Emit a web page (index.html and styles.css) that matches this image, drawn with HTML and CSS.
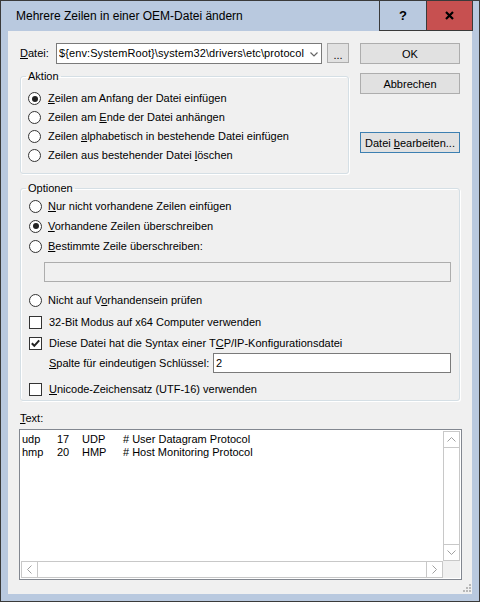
FILE: index.html
```html
<!DOCTYPE html>
<html>
<head>
    <meta charset="utf-8">
    <link rel="stylesheet" href="styles.css">
</head>
<body>
    <div class="window">
        <div class="titlebar">
            <span class="title">Mehrere Zeilen in einer OEM-Datei ändern</span>
            <div class="caption_btn help">?</div>
            <div class="caption_btn close">
                <svg width="9" height="9" viewBox="0 0 9 9"><path d="M1 1 L8 8 M8 1 L1 8" stroke="#000" stroke-width="2.2"/></svg>
            </div>
        </div>

        <div class="client">
            <div class="top">
                <div class="left_col">
                    <!-- file selection -->
                    <div class="file_row">
                        <span class="file_label"><u>D</u>atei:</span>
                        <div class="combo">
                            <span class="combo_text">${env:SystemRoot}\system32\drivers\etc\protocol</span>
                            <svg class="combo_arrow" width="8" height="5" viewBox="0 0 8 5"><polyline points="0.5,0.5 4,4 7.5,0.5" fill="none" stroke="#666" stroke-width="1.2"/></svg>
                        </div>
                        <button class="btn browse">...</button>
                    </div>

                    <fieldset class="group action">
                        <legend>Aktion</legend>
                        <div class="opt"><span class="radio checked"></span><span><u>Z</u>eilen am Anfang der Datei einfügen</span></div>
                        <div class="opt"><span class="radio"></span><span>Zeilen am <u>E</u>nde der Datei anhängen</span></div>
                        <div class="opt"><span class="radio"></span><span>Zeilen <u>a</u>lphabetisch in bestehende Datei einfügen</span></div>
                        <div class="opt"><span class="radio"></span><span>Zeilen aus bestehender Datei <u>l</u>öschen</span></div>
                    </fieldset>
                </div>

                <div class="side_buttons">
                    <button class="btn ok">OK</button>
                    <button class="btn cancel">Abbrechen</button>
                    <button class="btn edit focused">Datei <u>b</u>earbeiten...</button>
                </div>
            </div>

            <fieldset class="group options">
                <legend>Optionen</legend>
                <div class="opt r1"><span class="radio"></span><span><u>N</u>ur nicht vorhandene Zeilen einfügen</span></div>
                <div class="opt r1"><span class="radio checked"></span><span><u>V</u>orhandene Zeilen überschreiben</span></div>
                <div class="opt r1"><span class="radio"></span><span><u>B</u>estimmte Zeile überschreiben:</span></div>
                <div class="line_input disabled"></div>
                <div class="opt r4"><span class="radio"></span><span>Nicht auf V<u>o</u>rhandensein prüfen</span></div>
                <div class="opt r5"><span class="check"></span><span>32-Bit Modus auf x64 Computer verwenden</span></div>
                <div class="opt r6">
                    <span class="check">
                        <svg width="11" height="11" viewBox="0 0 11 11"><polyline points="1.8,5.2 4.3,7.8 9.2,2.4" fill="none" stroke="#222" stroke-width="2"/></svg>
                    </span>
                    <span>Diese Datei hat die Syntax einer T<u>C</u>P/IP-Konfigurationsdatei</span>
                </div>
                <div class="key_row">
                    <span class="key_label"><u>S</u>palte für eindeutigen Schlüssel:</span>
                    <div class="line_input key_input">2</div>
                </div>
                <div class="opt r7"><span class="check"></span><span><u>U</u>nicode-Zeichensatz (UTF-16) verwenden</span></div>
            </fieldset>

            <div class="text_label"><u>T</u>ext:</div>

            <div class="editor">
                <div class="editor_text">
                    <div class="line"><span class="c1">udp</span><span class="c2">17</span><span class="c3">UDP</span><span># User Datagram Protocol</span></div>
                    <div class="line"><span class="c1">hmp</span><span class="c2">20</span><span class="c3">HMP</span><span># Host Monitoring Protocol</span></div>
                </div>
                <div class="vscroll">
                    <div class="sb_btn up">
                        <svg width="9" height="5" viewBox="0 0 9 5"><polyline points="0.5,4.5 4.5,0.5 8.5,4.5" fill="none" stroke="#a0a0a0"/></svg>
                    </div>
                    <div class="sb_track"></div>
                    <div class="sb_btn down">
                        <svg width="9" height="5" viewBox="0 0 9 5"><polyline points="0.5,0.5 4.5,4.5 8.5,0.5" fill="none" stroke="#a0a0a0"/></svg>
                    </div>
                </div>
                <div class="hscroll">
                    <div class="sb_btn left">
                        <svg width="5" height="9" viewBox="0 0 5 9"><polyline points="4.5,0.5 0.5,4.5 4.5,8.5" fill="none" stroke="#a0a0a0"/></svg>
                    </div>
                    <div class="sb_track"></div>
                    <div class="sb_btn right">
                        <svg width="5" height="9" viewBox="0 0 5 9"><polyline points="0.5,0.5 4.5,4.5 0.5,8.5" fill="none" stroke="#a0a0a0"/></svg>
                    </div>
                </div>
                <div class="sb_corner"></div>
            </div>

            <!-- size grip -->
            <svg class="grip" width="8" height="8" viewBox="0 0 8 8" fill="#b8b8b8">
                <rect x="6" y="0" width="2" height="2"/>
                <rect x="3" y="3" width="2" height="2"/><rect x="6" y="3" width="2" height="2"/>
                <rect x="0" y="6" width="2" height="2"/><rect x="3" y="6" width="2" height="2"/><rect x="6" y="6" width="2" height="2"/>
            </svg>
        </div>
    </div>
</body>
</html>
```

FILE: styles.css
```css
* {
    box-sizing: border-box;
}

body {
    margin: 0;
    font-family: "Liberation Sans", Arial, sans-serif;
    font-size: 11px;
    line-height: 13px;
    color: #000;
}

u {
    text-decoration: underline;
    text-underline-offset: 1px;
}

/* window frame */
.window {
    width: 480px;
    height: 602px;
    border: 1px solid #3a3a3a;
    background-color: #b9c9df;
    display: flex;
    flex-direction: column;
}

.titlebar {
    height: 30px;
    flex-shrink: 0;
    display: flex;
}

.title {
    flex: 1;
    padding-left: 15px;
    font-size: 12px;
    line-height: 30px;
}

.caption_btn {
    width: 47px;
    height: 30px;
    border: 1px solid #3a3a3a;
    border-top: none;
    display: flex;
    align-items: center;
    justify-content: center;
}

.help {
    border-right: none;
    font-weight: bold;
    font-size: 13px;
}

.close {
    background-color: #c75050;
    margin-right: 6px;
}

.client {
    position: relative;
    flex: 1;
    margin: 0 7px 7px;
    background-color: #f0f0f0;
    padding: 12px 0 0 12px;
}

/* top part: file row, action group, buttons */
.top {
    display: flex;
}

.left_col {
    width: 329px;
}

.file_row {
    display: flex;
    align-items: flex-start;
    height: 21px;
}

.file_label {
    width: 36px;
    line-height: 21px;
}

.combo {
    width: 266px;
    height: 21px;
    border: 1px solid #7a7a7a;
    background-color: #fff;
    display: flex;
    align-items: center;
    padding: 0 3px 0 2px;
}

.combo_text {
    flex: 1;
    white-space: nowrap;
    overflow: hidden;
    letter-spacing: 0.1px;
}

.combo_arrow {
    margin-top: 1px;
}

.btn {
    font-family: inherit;
    font-size: 11px;
    color: #000;
    background-color: #e1e1e1;
    border: 1px solid #adadad;
    padding: 0;
    height: 21px;
    width: 100px;
}

.browse {
    width: 22px;
    height: 20px;
    margin-left: 5px;
    padding-top: 4px;
}

.side_buttons {
    margin-left: 11px;
    display: flex;
    flex-direction: column;
}

.cancel {
    margin-top: 9px;
}

.edit {
    margin-top: 38px;
}

.focused {
    border-color: #3c7fb1;
}

/* group boxes */
.group {
    margin: 0;
    padding: 0;
    border: 1px solid #d5dfe5;
    border-radius: 3px;
    box-shadow: inset 1px 1px 0 #fff, 1px 1px 0 #fff;
    min-inline-size: 0;
}

.group legend {
    margin-left: 5px;
    padding: 0 2px;
    line-height: 13px;
}

.action {
    margin-top: 6px;
    padding: 6px 0 8px;
}

.opt {
    display: flex;
    align-items: center;
    height: 19px;
    padding-left: 7px;
    white-space: nowrap;
}

.radio {
    width: 13px;
    height: 13px;
    border: 1px solid #333;
    border-radius: 50%;
    background-color: #fff;
    margin-right: 7px;
    display: flex;
    align-items: center;
    justify-content: center;
    flex-shrink: 0;
}

.radio.checked::after {
    content: "";
    width: 6px;
    height: 6px;
    border-radius: 50%;
    background-color: #222;
}

.check {
    width: 13px;
    height: 13px;
    border: 1px solid #333;
    background-color: #fff;
    margin-right: 7px;
    flex-shrink: 0;
}

.check svg {
    display: block;
}

.options {
    width: 440px;
    margin-top: 8px;
    padding: 1px 0 2px;
}

.options .opt {
    padding-left: 8px;
}

.options .radio {
    margin-right: 6px;
}

.options .r1 {
    height: 20px;
}

.options .r4 {
    height: 20px;
    margin-top: 8px;
}

.options .r5 {
    height: 20px;
    margin-top: 2px;
}

.options .r6 {
    margin-top: 2px;
}

.options .r7 {
    height: 18px;
    margin-top: 7px;
}

.line_input {
    height: 20px;
    border: 1px solid #7a7a7a;
    background-color: #fff;
}

.line_input.disabled {
    width: 407px;
    margin: 6px 0 0 23px;
    border-color: #adadad;
    background-color: #f0f0f0;
}

.key_row {
    display: flex;
    align-items: center;
    height: 20px;
    padding-left: 28px;
}

.key_label {
    width: 164px;
}

.key_input {
    width: 238px;
    padding-left: 2px;
    line-height: 18px;
}

.text_label {
    margin-top: 11px;
    height: 13px;
}

/* multi-line text box with scroll bars */
.editor {
    width: 443px;
    height: 151px;
    margin: 4px 0 0 -1px;
    border: 1px solid #828790;
    padding: 1px;
    background-color: #fff;
    display: grid;
    grid-template-columns: 1fr 17px;
    grid-template-rows: 1fr 17px;
}

.editor_text {
    padding: 2px 0 0 1px;
}

.line {
    display: flex;
    white-space: nowrap;
}

.c1 {
    width: 35px;
}

.c2 {
    width: 25px;
}

.c3 {
    width: 41px;
}

.vscroll {
    border: 1px solid #c8c8c8;
    display: flex;
    flex-direction: column;
}

.hscroll {
    border: 1px solid #c8c8c8;
    display: flex;
}

.sb_track {
    flex: 1;
}

.sb_btn {
    display: flex;
    align-items: center;
    justify-content: center;
}

.sb_btn.up {
    height: 16px;
    border-bottom: 1px solid #c8c8c8;
}

.sb_btn.down {
    height: 16px;
    border-top: 1px solid #c8c8c8;
}

.sb_btn.left {
    width: 16px;
    border-right: 1px solid #c8c8c8;
}

.sb_btn.right {
    width: 16px;
    border-left: 1px solid #c8c8c8;
}

.sb_corner {
    background-color: #f0f0f0;
}

.grip {
    position: absolute;
    right: 1px;
    bottom: 2px;
}
```
